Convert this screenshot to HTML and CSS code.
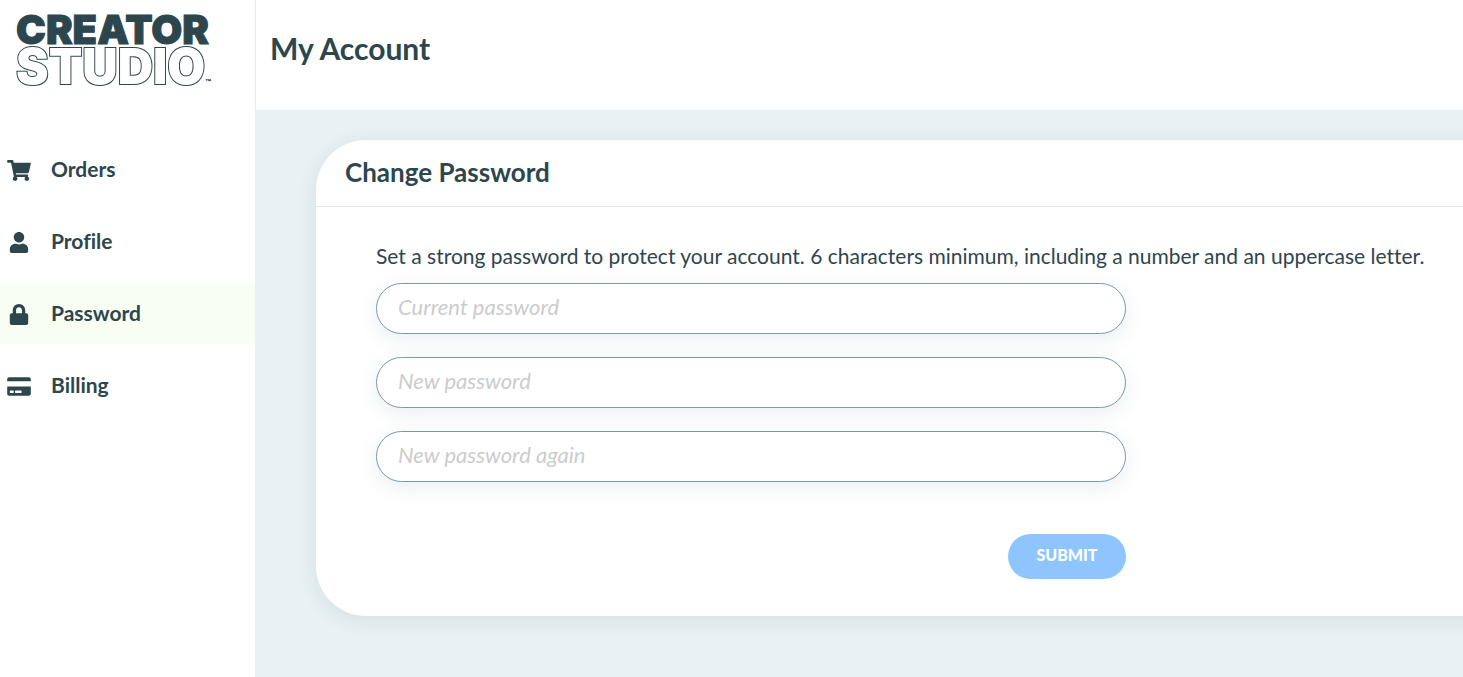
FILE: index.html
```html
<!DOCTYPE html>
<html lang="en">
<head>
<meta charset="utf-8">
<meta name="viewport" content="width=device-width, initial-scale=1">
<title>My Account</title>
<link rel="stylesheet" href="styles.css">
</head>
<body>
<div class="app">
  <aside class="sidebar">
    <a class="logo" href="#">
      <span class="logo-top">CREATOR</span>
      <span class="logo-bottom">STUDIO<small class="logo-tm">™</small></span>
    </a>
    <nav class="menu">
      <a class="menu-item" href="#">
        <svg class="icon" viewBox="0 0 576 512" aria-hidden="true"><path d="M528.12 301.319l47.273-208C578.806 78.301 567.391 64 551.99 64H159.208l-9.166-44.81C147.758 8.021 137.93 0 126.529 0H24C10.745 0 0 10.745 0 24v16c0 13.255 10.745 24 24 24h69.883l70.248 343.435C147.325 417.1 136 435.222 136 456c0 30.928 25.072 56 56 56s56-25.072 56-56c0-15.674-6.447-29.835-16.824-40h209.647C430.447 426.165 424 440.326 424 456c0 30.928 25.072 56 56 56s56-25.072 56-56c0-22.172-12.888-41.332-31.579-50.405l5.517-24.276c3.413-15.018-8.002-29.319-23.403-29.319H218.117l-6.545-32h293.145c11.206 0 20.92-7.754 23.403-18.681z"/></svg>
        <span>Orders</span>
      </a>
      <a class="menu-item" href="#">
        <svg class="icon" viewBox="0 0 448 512" aria-hidden="true"><path d="M224 256c70.700 0 128-57.300 128-128S294.700 0 224 0 96 57.300 96 128s57.300 128 128 128zm89.600 32h-16.700c-22.200 10.200-46.900 16-72.900 16s-50.600-5.800-72.900-16h-16.700C60.200 288 0 348.200 0 422.400V464c0 26.500 21.500 48 48 48h352c26.500 0 48-21.500 48-48v-41.600c0-74.200-60.200-134.400-134.400-134.400z"/></svg>
        <span>Profile</span>
      </a>
      <a class="menu-item active" href="#" aria-current="page">
        <svg class="icon" viewBox="0 0 448 512" aria-hidden="true"><path d="M400 224h-24v-72C376 68.200 307.800 0 224 0S72 68.200 72 152v72H48c-26.500 0-48 21.500-48 48v192c0 26.500 21.500 48 48 48h352c26.500 0 48-21.500 48-48V272c0-26.500-21.500-48-48-48zm-104 0H152v-72c0-39.700 32.300-72 72-72s72 32.300 72 72v72z"/></svg>
        <span>Password</span>
      </a>
      <a class="menu-item" href="#">
        <svg class="icon" viewBox="0 0 576 512" aria-hidden="true"><path d="M0 432c0 26.500 21.500 48 48 48h480c26.500 0 48-21.500 48-48V256H0v176zm192-68c0-6.600 5.400-12 12-12h136c6.600 0 12 5.400 12 12v40c0 6.600-5.400 12-12 12H204c-6.600 0-12-5.400-12-12v-40zm-128 0c0-6.600 5.400-12 12-12h72c6.600 0 12 5.400 12 12v40c0 6.600-5.400 12-12 12H76c-6.600 0-12-5.400-12-12v-40zM576 80v48H0V80c0-26.500 21.500-48 48-48h480c26.500 0 48 21.500 48 48z"/></svg>
        <span>Billing</span>
      </a>
    </nav>
  </aside>
  <main class="main">
    <header class="page-header"><h1 class="page-title">My Account</h1></header>
    <div class="content">
      <section class="card">
        <h2 class="card-title">Change Password</h2>
        <div class="card-body">
          <p class="hint" id="hint">Set a strong password to protect your account. 6 characters minimum, including a number and an uppercase letter.</p>
          <form class="form">
            <input class="field" type="password" placeholder="Current password" aria-label="Current password">
            <input class="field" type="password" placeholder="New password" aria-label="New password" aria-describedby="hint">
            <input class="field" type="password" placeholder="New password again" aria-label="New password again">
            <button class="submit" type="button">SUBMIT</button>
          </form>
        </div>
      </section>
    </div>
  </main>
</div>
</body>
</html>
```
FILE: styles.css
```css
* { box-sizing: border-box; }
body {
  margin: 0;
  color: #2d464e;
  font-family: Lato, "Open Sans", sans-serif;
  font-size: 21px;
  font-variant-ligatures: none;
  background: #fff;
}
.app { display: flex; min-height: 100vh; overflow: hidden; }
.sidebar { flex: 0 0 255px; }
.logo {
  display: flex;
  flex-direction: column;
  height: 110px;
  padding: 12px 0 0 16px;
  color: #2d464e;
  font-family: Inter, sans-serif;
  font-weight: 900;
  text-decoration: none;
}
.logo-top {
  font-size: 40px;
  line-height: 36px;
  -webkit-text-stroke: 1px #2d464e;
}
.logo-bottom {
  display: flex;
  align-items: flex-end;
  font-size: 49px;
  line-height: 37px;
  color: #fff;
  -webkit-text-stroke: 2px #2d464e;
  paint-order: stroke fill;
}
.logo-tm {
  font-size: 9px;
  line-height: 4px;
  color: #2d464e;
  -webkit-text-stroke: 0;
}
.menu { display: flex; flex-direction: column; gap: 12px; padding-top: 30px; }
.menu-item {
  display: flex;
  align-items: center;
  gap: 20px;
  height: 60px;
  padding: 0 7px 4px;
  color: #2d464e;
  font-weight: 700;
  text-decoration: none;
}
.menu-item.active { background: #f8fff2; }
.icon { width: 24px; height: 21px; margin-top: 4px; fill: #2d464e; }
.main {
  flex: 1 0 0;
  display: flex;
  flex-direction: column;
  min-width: 0;
  background: #e8f1f4;
}
.page-header {
  height: 110px;
  padding: 30px 14px;
  border-left: 1px solid #e8ebec;
  background: #fff;
}
.page-title { margin: 0; font-size: 30px; line-height: 36px; font-weight: 700; }
.content { padding: 30px 0 60px 61px; }
.card {
  margin-right: -60px;
  border-radius: 50px;
  background: #fff;
  box-shadow: 0 4px 20px rgba(45, 85, 95, 0.1);
}
.card-title {
  margin: 0;
  height: 67px;
  padding: 15px 29px;
  border-bottom: 1px solid #e5e8e9;
  font-size: 26px;
  line-height: 34px;
  font-weight: 700;
}
.card-body { padding: 34px 60px 37px; }
.hint { margin: 0 0 12px; line-height: 30px; white-space: nowrap; }
.form { display: flex; flex-direction: column; gap: 23px; max-width: 750px; }
.field {
  width: 100%;
  height: 51px;
  padding: 0 21px 5px;
  border: 1px solid #7b9aa2;
  border-radius: 26px;
  background: #fff;
  color: #2d464e;
  font: inherit;
  font-size: 22px;
  box-shadow: 0 5px 20px rgba(45, 85, 95, 0.1);
}
.field::placeholder { color: #ccc; font-style: italic; opacity: 1; }
.submit {
  align-self: flex-end;
  width: 118px;
  height: 45px;
  margin-top: 29px;
  padding: 0 0 4px;
  border: 0;
  border-radius: 23px;
  background: #8ec5ff;
  color: #fff;
  font-family: inherit;
  font-size: 16px;
  font-weight: 900;
}
```
